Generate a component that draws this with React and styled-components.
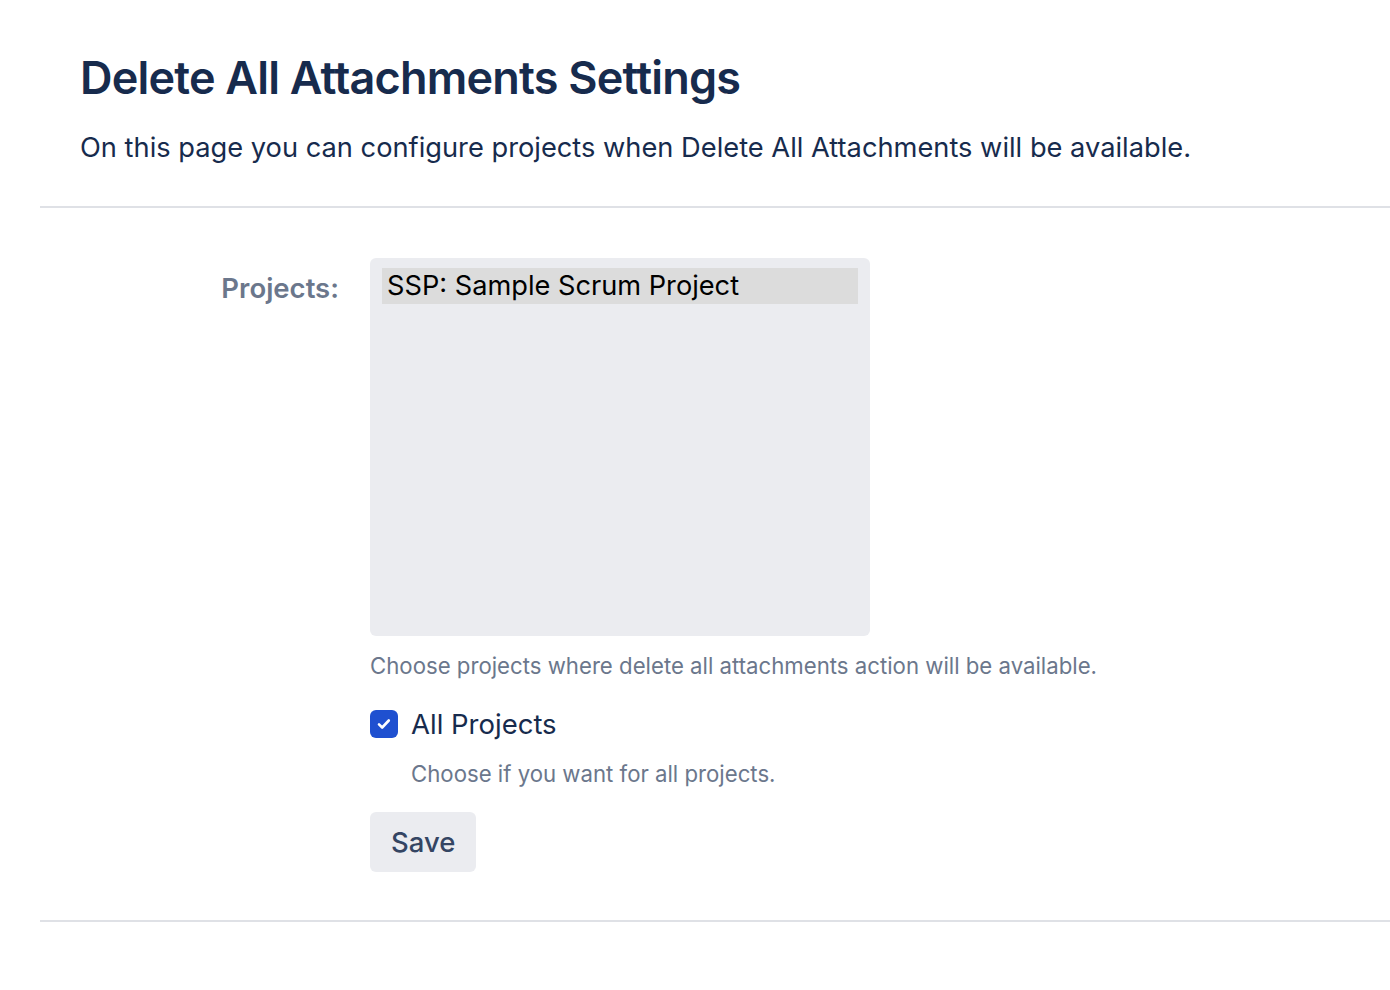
import React from "react";
import styled, { createGlobalStyle } from "styled-components";

const Global = createGlobalStyle`
  html, body { margin: 0; padding: 0; background: #fff; }
  body { font-family: Inter, "Noto Sans", "Liberation Sans", sans-serif; color: #172b4d; }
  * { box-sizing: border-box; }
`;

const Page = styled.div`
  padding: 48px 0 60px 40px;
`;

const Header = styled.header`
  padding: 0 40px 38px;
  border-bottom: 2px solid #dfe1e6;
`;

const Title = styled.h1`
  margin: 0;
  font-size: 45px;
  line-height: 60px;
  font-weight: 600;
  letter-spacing: -0.8px;
  color: #172b4d;
`;

const Intro = styled.p`
  margin: 20px 0 0;
  font-size: 27.25px;
  line-height: 40px;
  color: #172b4d;
`;

const Form = styled.form`
  padding: 50px 0 48px;
  border-bottom: 2px solid #dfe1e6;
  display: grid;
  grid-template-columns: 299px 1fr;
  column-gap: 31px;
  align-items: start;
`;

const Label = styled.label`
  text-align: right;
  font-size: 27.5px;
  line-height: 36px;
  font-weight: 600;
  color: #6b778c;
  padding-top: 12px;
`;

const Field = styled.div`
  display: flex;
  flex-direction: column;
  align-items: flex-start;
`;

const ListBox = styled.div`
  width: 500px;
  height: 378px;
  background: #ebecf0;
  border-radius: 6px;
  padding: 10px 12px;
`;

const Option = styled.div`
  height: 36px;
  line-height: 36px;
  padding: 0 5px;
  font-size: 27.2px;
  color: #000;
  background: ${(p) => (p.$selected ? "#dcdcdc" : "transparent")};
`;

const Help = styled.div`
  margin-top: ${(p) => p.$top || 16}px;
  padding-left: ${(p) => p.$indent || 0}px;
  font-size: 22.2px;
  line-height: 28px;
  color: #6b778c;
`;

const CheckRow = styled.label`
  margin-top: 26px;
  display: flex;
  align-items: center;
  gap: 13px;
  font-size: 27.5px;
  line-height: 36px;
  color: #172b4d;
`;

const Box = styled.span`
  width: 28px;
  height: 28px;
  border-radius: 6px;
  background: #1f50d0;
  display: inline-flex;
  align-items: center;
  justify-content: center;
`;

const Button = styled.button`
  margin-top: 24px;
  height: 60px;
  padding: 0 21px;
  border: none;
  border-radius: 6px;
  background: #ebecf0;
  color: #344563;
  font-family: inherit;
  font-size: 27.5px;
  font-weight: 500;
`;

export default function App() {
  return (
    <>
      <Global />
      <Page>
        <Header>
          <Title>Delete All Attachments Settings</Title>
          <Intro>On this page you can configure projects when Delete All Attachments will be available.</Intro>
        </Header>
        <Form onSubmit={(e) => e.preventDefault()}>
          <Label>Projects:</Label>
          <Field>
            <ListBox>
              <Option $selected>SSP: Sample Scrum Project</Option>
            </ListBox>
            <Help $top={16}>Choose projects where delete all attachments action will be available.</Help>
            <CheckRow>
              <Box>
                <svg width="18" height="18" viewBox="0 0 18 18">
                  <path d="M4 9.3l3.2 3.2 6.6-7" fill="none" stroke="#fff" strokeWidth="2.6" strokeLinecap="round" strokeLinejoin="round" />
                </svg>
              </Box>
              All Projects
            </CheckRow>
            <Help $top={18} $indent={41}>Choose if you want for all projects.</Help>
            <Button type="submit">Save</Button>
          </Field>
        </Form>
      </Page>
    </>
  );
}
